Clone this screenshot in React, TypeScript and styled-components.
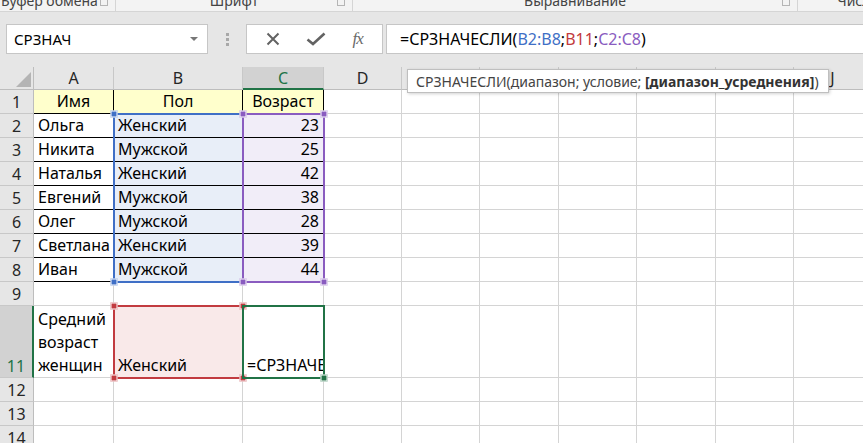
import React from 'react';
import styled, { createGlobalStyle } from 'styled-components';

const GlobalStyle = createGlobalStyle`
  html, body {
    margin: 0;
    padding: 0;
    background: #ffffff;
  }
  body {
    font-family: "Noto Sans", "Liberation Sans", sans-serif;
  }
`;

const COLS = ['A', 'B', 'C', 'D', 'E', 'F', 'G', 'H', 'I', 'J'];
const COL_WIDTHS = [80, 129, 81, 78, 78, 79, 78, 79, 78, 78];
const ROW_HEAD_W = 34;

type CellData = {
  text?: string;
  align?: 'left' | 'center' | 'right';
  fill?: string;
  boxed?: boolean;
  wrap?: boolean;
};

type RowData = { num: number; height: number; active?: boolean; cells: CellData[] };

const people: [string, string, string][] = [
  ['Ольга', 'Женский', '23'],
  ['Никита', 'Мужской', '25'],
  ['Наталья', 'Женский', '42'],
  ['Евгений', 'Мужской', '38'],
  ['Олег', 'Мужской', '28'],
  ['Светлана', 'Женский', '39'],
  ['Иван', 'Мужской', '44'],
];

const YELLOW = '#ffffcc';
const BLUE_FILL = '#e8eef8';
const PURPLE_FILL = '#f1edf8';
const RED_FILL = '#f9e9e9';

const rows: RowData[] = [
  {
    num: 1,
    height: 24,
    cells: [
      { text: 'Имя', align: 'center', fill: YELLOW, boxed: true },
      { text: 'Пол', align: 'center', fill: YELLOW, boxed: true },
      { text: 'Возраст', align: 'center', fill: YELLOW, boxed: true },
    ],
  },
  ...people.map(([name, sex, age], i) => ({
    num: i + 2,
    height: 24,
    cells: [
      { text: name, boxed: true },
      { text: sex, fill: BLUE_FILL, boxed: true },
      { text: age, align: 'right' as const, fill: PURPLE_FILL, boxed: true },
    ],
  })),
  { num: 9, height: 24, cells: [] },
  {
    num: 11,
    height: 72,
    active: true,
    cells: [
      { text: 'Средний возраст женщин', wrap: true },
      { text: 'Женский', fill: RED_FILL },
      { text: '=СРЗНАЧЕ' },
    ],
  },
  { num: 12, height: 24, cells: [] },
  { num: 13, height: 24, cells: [] },
  { num: 14, height: 24, cells: [] },
];

const Page = styled.div`
  position: relative;
  width: 863px;
  height: 443px;
  overflow: hidden;
  background: #e6e6e6;
  color: #000;
`;

/* ---------- ribbon group labels ---------- */

const RibbonStrip = styled.div`
  display: flex;
  height: 11px;
  overflow: hidden;
  background: #f3f3f3;
  border-bottom: 1px solid #d5d5d5;
`;

const RibbonGroup = styled.div<{ $w: number }>`
  position: relative;
  flex: 0 0 ${p => p.$w}px;
  border-right: 1px solid #d5d5d5;
  display: flex;
  justify-content: center;
`;

const GroupLabel = styled.span<{ $left?: boolean }>`
  margin-top: -7px;
  font-size: 14px;
  line-height: 16px;
  color: #444;
  white-space: nowrap;
  ${p => p.$left && 'margin-right: auto; padding-left: 1px;'}
`;

const Launcher = styled.span`
  position: absolute;
  right: 7px;
  top: 0;
  width: 6px;
  height: 5px;
  border: 1px solid #b5b5b5;
  border-top: none;
`;

/* ---------- formula bar ---------- */

const FormulaBar = styled.div`
  display: flex;
  align-items: center;
  height: 30px;
  margin-top: 12px;
  padding-left: 6px;
`;

const NameBox = styled.div`
  box-sizing: border-box;
  width: 202px;
  height: 30px;
  background: #fff;
  border: 1px solid #c6c6c6;
  display: flex;
  align-items: center;
  padding: 0 6px 0 7px;
  font-size: 15px;
`;

const DropArrow = styled.span`
  margin-left: auto;
  width: 0;
  height: 0;
  border-left: 4px solid transparent;
  border-right: 4px solid transparent;
  border-top: 4px solid #777;
  margin-right: 3px;
`;

const Grip = styled.div`
  width: 38px;
  display: flex;
  flex-direction: column;
  align-items: center;
  gap: 2px;
  span {
    width: 3px;
    height: 3px;
    background: #a8a8a8;
  }
`;

const FxBox = styled.div`
  box-sizing: border-box;
  width: 137px;
  height: 30px;
  background: #fff;
  border: 1px solid #c6c6c6;
  display: flex;
  align-items: center;
  justify-content: space-around;
  padding: 0 6px;
`;

const FxGlyph = styled.span`
  font-family: "Liberation Serif", serif;
  font-style: italic;
  font-size: 17px;
  color: #6a6a6a;
  letter-spacing: -1px;
`;

const FormulaInput = styled.div`
  box-sizing: border-box;
  flex: 1;
  height: 30px;
  margin-left: 3px;
  background: #fff;
  border: 1px solid #c6c6c6;
  border-right: none;
  display: flex;
  align-items: center;
  padding-left: 13px;
  font-size: 16px;
  white-space: nowrap;
`;

const Ref = styled.span<{ $c: string }>`
  color: ${p => p.$c};
`;

/* ---------- sheet ---------- */

const Sheet = styled.div`
  position: relative;
  margin-top: 13px;
`;

const GridRow = styled.div<{ $h: number }>`
  display: flex;
  height: ${p => p.$h}px;
`;

const Corner = styled.div`
  position: relative;
  box-sizing: border-box;
  flex: 0 0 ${ROW_HEAD_W}px;
  background: #e6e6e6;
  border-right: 1px solid #bdbdbd;
  border-bottom: 1px solid #bdbdbd;
  svg {
    position: absolute;
    right: 2px;
    bottom: 2px;
  }
`;

const ColHead = styled.div<{ $w: number; $sel?: boolean }>`
  box-sizing: border-box;
  flex: 0 0 ${p => p.$w}px;
  display: flex;
  align-items: center;
  justify-content: center;
  font-size: 16px;
  background: ${p => (p.$sel ? '#d2d2d2' : '#e6e6e6')};
  color: ${p => (p.$sel ? '#217346' : '#262626')};
  border-right: 1px solid #c8c8c8;
  border-bottom: ${p => (p.$sel ? '2px solid #217346' : '1px solid #bdbdbd')};
`;

const RowHead = styled.div<{ $sel?: boolean }>`
  box-sizing: border-box;
  flex: 0 0 ${ROW_HEAD_W}px;
  display: flex;
  align-items: flex-end;
  justify-content: center;
  padding-bottom: 0;
  font-size: 16px;
  line-height: 22px;
  background: ${p => (p.$sel ? '#d2d2d2' : '#e6e6e6')};
  color: ${p => (p.$sel ? '#217346' : '#262626')};
  border-right: ${p => (p.$sel ? '2px solid #217346' : '1px solid #bdbdbd')};
  border-bottom: 1px solid #c8c8c8;
`;

const Cell = styled.div<{
  $w: number;
  $align: string;
  $fill?: string;
  $boxed?: boolean;
  $wrap?: boolean;
}>`
  box-sizing: border-box;
  flex: 0 0 ${p => p.$w}px;
  display: flex;
  align-items: flex-end;
  justify-content: ${p =>
    p.$align === 'center' ? 'center' : p.$align === 'right' ? 'flex-end' : 'flex-start'};
  padding: 0 4px 0 4px;
  overflow: hidden;
  white-space: ${p => (p.$wrap ? 'normal' : 'nowrap')};
  font-size: 16px;
  line-height: 23px;
  background: ${p => p.$fill || '#fff'};
  border-right: 1px solid ${p => (p.$boxed ? '#000' : '#d4d4d4')};
  border-bottom: 1px solid ${p => (p.$boxed ? '#000' : '#d4d4d4')};
`;

const RangeBox = styled.div<{ $c: string }>`
  position: absolute;
  box-sizing: border-box;
  border: 2px solid ${p => p.$c};
  pointer-events: none;
`;

const Handle = styled.div<{ $c: string }>`
  position: absolute;
  width: 5px;
  height: 5px;
  background: ${p => p.$c};
  border: 1px solid #fff;
  transform: translate(-50%, -50%);
`;

const Tooltip = styled.div`
  position: absolute;
  left: 407px;
  top: 69px;
  box-sizing: border-box;
  height: 24px;
  padding: 0 9px 0 8px;
  display: flex;
  align-items: center;
  background: #fff;
  border: 1px solid #bfbfbf;
  box-shadow: 1px 1px 3px rgba(0, 0, 0, 0.18);
  font-size: 14px;
  color: #444;
  white-space: nowrap;
  b {
    color: #333;
  }
`;

const BLUE = '#3f6fc6';
const PURPLE = '#8a5cc0';
const RED = '#c23b40';
const GREEN = '#217346';

const colX = (i: number) => ROW_HEAD_W + COL_WIDTHS.slice(0, i).reduce((a, b) => a + b, 0);

export default function App() {
  const headerH = 23;
  const rowY = (idx: number) => headerH + rows.slice(0, idx).reduce((a, r) => a + r.height, 0);

  const bx1 = colX(1);
  const cx1 = colX(2);
  const cx2 = colX(3);
  const y2 = rowY(1);
  const y8 = rowY(8);
  const y11 = rowY(9);
  const y11b = rowY(10);

  const box = (c: string, x1: number, yA: number, x2: number, yB: number, corners: [number, number][]) => (
    <>
      <RangeBox $c={c} style={{ left: x1 - 1, top: yA - 1, width: x2 - x1 + 2, height: yB - yA + 2 }} />
      {corners.map(([x, y], i) => (
        <Handle key={i} $c={c} style={{ left: x, top: y }} />
      ))}
    </>
  );

  return (
    <Page>
      <GlobalStyle />
      <RibbonStrip>
        <RibbonGroup $w={115}>
          <GroupLabel $left>Буфер обмена</GroupLabel>
          <Launcher />
        </RibbonGroup>
        <RibbonGroup $w={236}>
          <GroupLabel>Шрифт</GroupLabel>
          <Launcher />
        </RibbonGroup>
        <RibbonGroup $w={444}>
          <GroupLabel>Выравнивание</GroupLabel>
          <Launcher />
        </RibbonGroup>
        <RibbonGroup $w={120}>
          <GroupLabel>Число</GroupLabel>
        </RibbonGroup>
      </RibbonStrip>

      <FormulaBar>
        <NameBox>
          СРЗНАЧ
          <DropArrow />
        </NameBox>
        <Grip>
          <span />
          <span />
          <span />
        </Grip>
        <FxBox>
          <svg width="14" height="14" viewBox="0 0 14 14">
            <path d="M1.5 1.5 L12.5 12.5 M12.5 1.5 L1.5 12.5" stroke="#636363" strokeWidth="2" fill="none" />
          </svg>
          <svg width="20" height="14" viewBox="0 0 20 14">
            <path d="M1.5 7.5 L7 12 L18.5 1.5" stroke="#636363" strokeWidth="2.6" fill="none" />
          </svg>
          <FxGlyph>fx</FxGlyph>
        </FxBox>
        <FormulaInput>
          =СРЗНАЧЕСЛИ(<Ref $c={BLUE}>B2:B8</Ref>;<Ref $c={RED}>B11</Ref>;<Ref $c={PURPLE}>C2:C8</Ref>)
        </FormulaInput>
      </FormulaBar>

      <Sheet>
        <GridRow $h={headerH}>
          <Corner>
            <svg width="15" height="15" viewBox="0 0 15 15">
              <polygon points="15,0 15,15 0,15" fill="#b4b4b4" />
            </svg>
          </Corner>
          {COLS.map((c, i) => (
            <ColHead key={c} $w={COL_WIDTHS[i]} $sel={c === 'C'}>
              {c}
            </ColHead>
          ))}
        </GridRow>
        {rows.map(r => (
          <GridRow key={r.num} $h={r.height}>
            <RowHead $sel={r.active}>{r.num}</RowHead>
            {COLS.map((c, i) => {
              const d = r.cells[i] || {};
              return (
                <Cell
                  key={c}
                  $w={COL_WIDTHS[i]}
                  $align={d.align || 'left'}
                  $fill={d.fill}
                  $boxed={d.boxed}
                  $wrap={d.wrap}
                >
                  {d.text}
                </Cell>
              );
            })}
          </GridRow>
        ))}

        {box(BLUE, bx1, y2, cx1, y8, [[bx1, y2], [bx1, y8]])}
        {box(PURPLE, cx1, y2, cx2, y8, [[cx1, y2], [cx2, y2], [cx1, y8], [cx2, y8]])}
        {box(RED, bx1, y11, cx1, y11b, [[bx1, y11], [cx1, y11], [bx1, y11b], [cx1, y11b]])}
        {box(GREEN, cx1, y11, cx2, y11b, [[cx2, y11b]])}
      </Sheet>

      <Tooltip>
        СРЗНАЧЕСЛИ(диапазон; условие;&nbsp;<b>[диапазон_усреднения]</b>)
      </Tooltip>
    </Page>
  );
}
